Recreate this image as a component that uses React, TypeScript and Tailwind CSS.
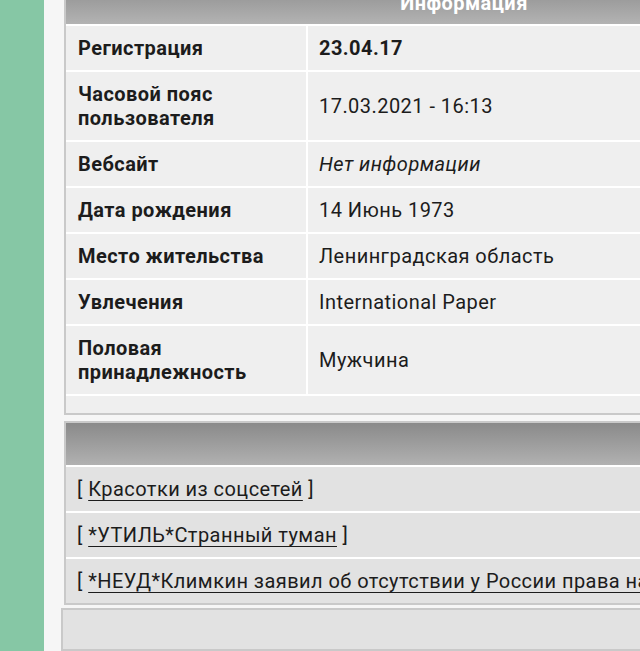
const rows: { label: string; value: string; kind?: "bold" | "italic" }[] = [
  { label: "Регистрация", value: "23.04.17", kind: "bold" },
  { label: "Часовой пояс пользователя", value: "17.03.2021 - 16:13" },
  { label: "Вебсайт", value: "Нет информации", kind: "italic" },
  { label: "Дата рождения", value: "14 Июнь 1973" },
  { label: "Место жительства", value: "Ленинградская область" },
  { label: "Увлечения", value: "International Paper" },
  { label: "Половая принадлежность", value: "Мужчина" },
];

const topics = [
  "Красотки из соцсетей",
  "*УТИЛЬ*Странный туман",
  "*НЕУД*Климкин заявил об отсутствии у России права на Крым",
];

export default function App() {
  return (
    <div
      className="flex h-[651px] w-[640px] overflow-hidden bg-[#f6f6f6] text-[20px] leading-[24px] tracking-[0.45px] text-[#1c1c1c]"
      style={{ fontFamily: "Roboto, 'Noto Sans', sans-serif" }}
    >
      <div className="w-[44px] shrink-0 bg-[#86c7a5]" />

      <div className="-mt-[20px] flex shrink-0 flex-col pl-[20px]">
        {/* profile info */}
        <div className="w-[800px] border-2 border-[#c9c9c9] bg-[#efefef] pb-[17px]">
          <div className="grid grid-cols-[240px_1fr] gap-[2px] bg-white pb-[2px]">
            <div className="col-span-2 flex h-[42px] items-center justify-center bg-gradient-to-b from-[#8c8c8c] to-[#b3b3b3] font-bold text-white">
              Информация
            </div>
            {rows.map((r) => (
              <div key={r.label} className="contents">
                <div className="flex items-center bg-[#efefef] py-[10px] pl-[12px] pr-[40px] font-bold">
                  {r.label}
                </div>
                <div
                  className={`flex items-center bg-[#efefef] py-[10px] pl-[11px] ${
                    r.kind === "bold" ? "font-bold" : ""
                  } ${r.kind === "italic" ? "italic" : ""}`}
                >
                  {r.value}
                </div>
              </div>
            ))}
          </div>
        </div>

        {/* latest topics */}
        <div className="mt-[6px] w-[800px] border-2 border-[#c9c9c9] bg-[#e2e2e2]">
          <div className="flex flex-col gap-[2px] bg-white">
            <div className="h-[42px] bg-gradient-to-b from-[#8a8a8a] to-[#b1b1b1]" />
            {topics.map((t) => (
              <div
                key={t}
                className="flex h-[44px] items-center whitespace-nowrap bg-[#e2e2e2] pl-[11px]"
              >
                [&nbsp;
                <a
                  href="#"
                  className="text-[#1c1c1c] underline decoration-[1px] underline-offset-[4px]"
                >
                  {t}
                </a>
                &nbsp;]
              </div>
            ))}
          </div>
        </div>

        <div className="-ml-[3px] mt-[3px] h-[80px] w-[800px] border-2 border-[#c9c9c9] bg-[#e2e2e2]" />
      </div>
    </div>
  );
}
